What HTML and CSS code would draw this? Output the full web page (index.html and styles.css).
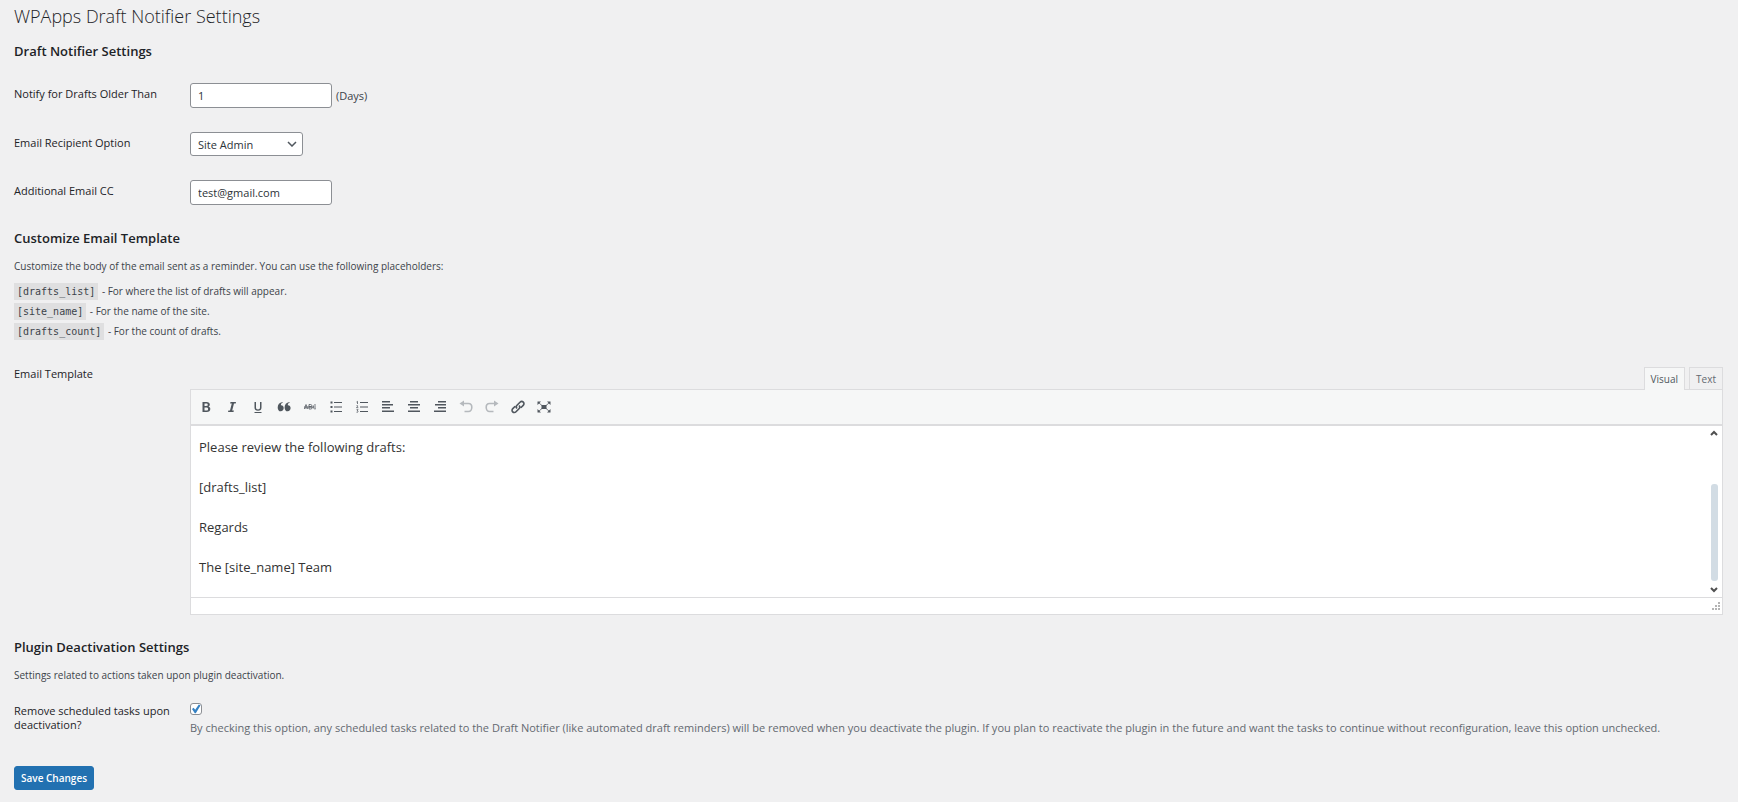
FILE: index.html
```html
<!DOCTYPE html>
<html lang="en">
<head>
<meta charset="utf-8">
<title>WPApps Draft Notifier Settings</title>
<link rel="stylesheet" href="styles.css">
</head>
<body>
<main class="wrap">
  <h1>WPApps Draft Notifier Settings</h1>
  <form>
    <section>
      <h2>Draft Notifier Settings</h2>
      <div class="fields">
        <div class="row">
          <label for="days">Notify for Drafts Older Than</label>
          <div class="field"><input class="control" id="days" type="text" inputmode="numeric" value="1"><span>(Days)</span></div>
        </div>
        <div class="row">
          <label for="recipient">Email Recipient Option</label>
          <div class="field select-box">
            <select class="control" id="recipient"><option>Site Admin</option></select>
            <svg class="chevron" viewBox="0 0 10 6" aria-hidden="true"><path d="M1 1l4 4 4-4"/></svg>
          </div>
        </div>
        <div class="row">
          <label for="cc">Additional Email CC</label>
          <div class="field"><input class="control" id="cc" type="text" value="test@gmail.com"></div>
        </div>
      </div>
    </section>

    <section>
      <h2>Customize Email Template</h2>
      <p class="intro">Customize the body of the email sent as a reminder. You can use the following placeholders:</p>
      <ul class="placeholders">
        <li><code>[drafts_list]</code> - For where the list of drafts will appear.</li>
        <li><code>[site_name]</code> - For the name of the site.</li>
        <li><code>[drafts_count]</code> - For the count of drafts.</li>
      </ul>
      <div class="row editor-row">
        <span class="label" id="template-label">Email Template</span>
        <div class="editor">
          <div class="tabs">
            <button type="button" class="tab active">Visual</button>
            <button type="button" class="tab">Text</button>
          </div>
          <div class="panel">
            <div class="toolbar">
              <button type="button" class="tool" aria-label="Bold"><svg viewBox="0 0 16 16"><path fill-rule="evenodd" d="M4.500 3h4c2.200 0 3.300 1 3.300 2.600 0 1-.5 1.700-1.300 2 1.200.4 1.800 1.200 1.800 2.400C12.300 12 11 13 8.700 13H4.500zM6.500 4.600v2.300h1.700c1 0 1.500-.4 1.500-1.200s-.5-1.100-1.500-1.100zm0 3.800v3h2c1.100 0 1.600-.5 1.600-1.500s-.6-1.500-1.700-1.500z"/></svg></button>
              <button type="button" class="tool" aria-label="Italic"><svg viewBox="0 0 16 16"><path d="M6.500 3H12l-.3 1.500H10L8.200 11.500h1.700L9.500 13H4l.4-1.500H6L7.800 4.500H6.100z"/></svg></button>
              <button type="button" class="tool" aria-label="Underline"><svg viewBox="0 0 16 16"><path d="M4.500 3h1.500v5.500c0 1.300.7 1.900 2 1.900s2-.6 2-1.900V3h1.500v5.600c0 2.100-1.200 3.200-3.500 3.200s-3.500-1.100-3.500-3.200zM4.500 13h7v1h-7z"/></svg></button>
              <button type="button" class="tool" aria-label="Blockquote"><svg viewBox="0 0 16 16"><path d="M7.200 3.300C5.500 4 4.900 5 4.900 6.300c1.700-.1 2.800 1 2.800 2.800 0 1.900-1.200 3.200-2.900 3.200-2 0-3.100-1.500-3.100-3.900C1.700 5.500 3.400 3.500 6.500 3zM14.100 3.300c-1.700.7-2.300 1.700-2.300 3 1.700-.1 2.800 1 2.800 2.800 0 1.900-1.200 3.200-2.900 3.200-2 0-3.100-1.500-3.100-3.900 0-2.900 1.700-4.900 4.800-5.400z"/></svg></button>
              <button type="button" class="tool" aria-label="Strikethrough"><svg class="line" viewBox="0 0 16 16"><path d="M2.300 10L4 5.500l1.800 4.500M3 9h2M7 10V5.500h1.500c1.800 0 1.800 2.200 0 2.200H7.200h1.500c2 0 2 2.300 0 2.300zM14 6.200c-3-2-4.200 5 0 3.400"/><path d="M2 8h12"/></svg></button>
              <button type="button" class="tool" aria-label="Bulleted list"><svg viewBox="0 0 16 16"><path d="M2.500 2.500h2v2h-2zM2.500 7h2v2h-2zM2.500 11.500h2v2h-2zM6 3h8v1H6zM6 7.500h8v1H6zM6 12h8v1H6z"/></svg></button>
              <button type="button" class="tool" aria-label="Numbered list"><svg viewBox="0 0 16 16"><path d="M6 3h8v1H6zM6 7.500h8v1H6zM6 12h8v1H6z"/><path class="thin" d="M2.500 3l1-.6V5M2.500 6.700c1.500-.5 1.700.5 0 2h1.800M2.500 10.700h1.600l-.8 1.100c1.300.2 1 1.900-.8 1.400"/></svg></button>
              <button type="button" class="tool" aria-label="Align left"><svg viewBox="0 0 16 16"><path d="M2 2h8v1.500H2zM2 5h11v1.500H2zM2 8h8v1.500H2zM2 11.500h12V13H2z"/></svg></button>
              <button type="button" class="tool" aria-label="Align center"><svg viewBox="0 0 16 16"><path d="M4 2h8v1.500H4zM2 5h12v1.500H2zM4 8h8v1.500H4zM2 11.500h12V13H2z"/></svg></button>
              <button type="button" class="tool" aria-label="Align right"><svg viewBox="0 0 16 16"><path d="M6 2h8v1.500H6zM3 5h11v1.500H3zM6 8h8v1.500H6zM2 11.500h12V13H2z"/></svg></button>
              <button type="button" class="tool faded" aria-label="Undo"><svg viewBox="0 0 16 16"><path d="M6 1.500v6L1.500 4.500z"/><path class="stroke" d="M5 4.500h5.500c2 0 3.300 1.500 3.300 3.700s-1.300 4.300-3.300 4.300H6.500"/></svg></button>
              <button type="button" class="tool faded" aria-label="Redo"><svg viewBox="0 0 16 16"><path d="M10 1.500v6l4.500-3z"/><path class="stroke" d="M11 4.500H5.500c-2 0-3.300 1.500-3.300 3.700s1.300 4.300 3.300 4.300h4"/></svg></button>
              <button type="button" class="tool" aria-label="Insert link"><svg viewBox="0 0 16 16"><path class="stroke" d="M7 9.500c-1-1-1-2.300 0-3.300l3-3c1-1 2.400-1 3.300-.1s.9 2.300-.1 3.300l-2.400 2.400M9 6.500c1 1 1 2.300 0 3.300l-3 3c-1 1-2.400 1-3.300.1s-.9-2.300.1-3.300l2.400-2.400"/></svg></button>
              <button type="button" class="tool" aria-label="Fullscreen"><svg viewBox="0 0 16 16"><path d="M5.500 6h5v4h-5zM1.500 2.500H5L1.500 6zM14.500 2.500H11L14.500 6zM1.500 13.500H5L1.500 10zM14.500 13.500H11l3.500-3.500z"/><path class="thin" d="M2.500 3.500l4 3.500M13.500 3.500l-4 3.500M2.500 12.500l4-3.500M13.500 12.500l-4-3.500"/></svg></button>
            </div>
            <div class="canvas">
              <div class="content" contenteditable="true" role="textbox" aria-multiline="true" aria-labelledby="template-label">
                <p>Please review the following drafts:</p>
                <p>[drafts_list]</p>
                <p>Regards</p>
                <p>The [site_name] Team</p>
              </div>
              <div class="scrollbar" aria-hidden="true">
                <svg viewBox="0 0 8 6"><path d="M1 5l3-3 3 3"/></svg>
                <div class="thumb"></div>
                <svg viewBox="0 0 8 6"><path d="M1 1l3 3 3-3"/></svg>
              </div>
            </div>
            <div class="status">
              <svg class="grip" viewBox="0 0 8 8" aria-hidden="true"><path d="M6 0h2v2H6zM3 3h2v2H3zM6 3h2v2H6zM0 6h2v2H0zM3 6h2v2H3zM6 6h2v2H6z"/></svg>
            </div>
          </div>
        </div>
      </div>
    </section>

    <section>
      <h2>Plugin Deactivation Settings</h2>
      <p class="intro">Settings related to actions taken upon plugin deactivation.</p>
      <div class="row cleanup-row">
        <label for="cleanup">Remove scheduled tasks upon deactivation?</label>
        <div>
          <input class="check" id="cleanup" type="checkbox" checked>
          <p class="description">By checking this option, any scheduled tasks related to the Draft Notifier (like automated draft reminders) will be removed when you deactivate the plugin. If you plan to reactivate the plugin in the future and want the tasks to continue without reconfiguration, leave this option unchecked.</p>
        </div>
      </div>
    </section>
    <button type="submit" class="save">Save Changes</button>
  </form>
</main>
</body>
</html>
```

FILE: styles.css
```css
* { box-sizing: border-box; }
body {
  margin: 0;
  background: #f0f0f1;
  color: #3c434a;
  font: 10px/16px "Segoe UI", "Open Sans", sans-serif;
}
h1, h2, p, ul { margin: 0; padding: 0; }
button, input, select { font-family: inherit; }
.wrap { padding: 4px 15px 14px 14px; }
h1 { color: #1d2327; font-size: 18px; line-height: 24px; font-weight: 300; }
h2 { color: #1d2327; font-size: 13px; line-height: 20px; font-weight: 600; }
section { padding-top: 13px; }

.fields { display: grid; gap: 24px; padding: 22px 0 10px; }
.row { display: grid; grid-template-columns: 160px minmax(0, 1fr); column-gap: 16px; align-items: start; }
.row > label, .label { color: #1d2327; font-size: 11px; line-height: 14px; font-weight: 500; }
.fields .row > label { padding-top: 4px; }
.field { display: flex; align-items: center; gap: 4px; font-size: 11px; }
.control {
  width: 142px;
  height: 25px;
  padding: 0 7px;
  border: 1px solid #8c8f94;
  border-radius: 3px;
  background: #fff;
  color: #2c3338;
  font-size: 11px;
}
.select-box { position: relative; width: 113px; }
.select-box .control { width: 100%; height: 24px; appearance: none; }
.chevron { position: absolute; right: 6px; width: 10px; height: 6px; pointer-events: none; }
.chevron path { fill: none; stroke: #50575e; stroke-width: 1.5; }

.intro { padding-top: 10px; }
.placeholders { list-style: none; padding-top: 7px; line-height: 20px; }
code {
  display: inline-block;
  margin-right: 1px;
  padding: 0 3px;
  background: #dfdfe0;
  font: 10px/17px "DejaVu Sans Mono", monospace;
}

.editor-row { padding: 26px 0 9px; }
.tabs { display: flex; justify-content: flex-end; gap: 4px; }
.tab {
  height: 22px;
  padding: 0 6px;
  border: 1px solid #dcdcde;
  border-bottom: 0;
  background: #f0f0f1;
  color: #646970;
  font-size: 10px;
}
.tab.active { position: relative; height: 23px; margin-bottom: -1px; background: #f6f7f7; color: #50575e; }
.panel { border: 1px solid #dcdcde; background: #fff; }
.toolbar { display: flex; gap: 10px; height: 36px; align-items: center; padding-left: 7px; border-bottom: 2px solid #dcdcde; background: #f6f7f7; }
.tool { width: 16px; height: 16px; padding: 0; border: 0; background: none; color: #50575e; }
.tool svg { display: block; width: 16px; height: 16px; fill: currentColor; }
.tool .line, .tool .stroke, .tool .thin { fill: none; stroke: currentColor; }
.tool .line, .tool .thin { stroke-width: 0.8; }
.tool .stroke { stroke-width: 1.6; }
.faded { color: #b5b9bd; }
.canvas { display: flex; height: 171px; }
.content { flex: 1; padding: 11px 8px 0; color: #333; font-size: 13px; line-height: 20px; outline: 0; }
.content p + p { margin-top: 20px; }
.scrollbar { display: flex; flex-direction: column; align-items: center; width: 8px; margin-right: 4px; padding: 4px 0; }
.scrollbar svg { width: 8px; height: 6px; fill: none; stroke: #505050; stroke-width: 2; }
.thumb { width: 7px; height: 97px; margin: auto 0 6px; border-radius: 3px; background: #d2dce4; }
.status { display: flex; justify-content: flex-end; align-items: flex-end; height: 17px; padding: 4px 2px; border-top: 1px solid #dcdcde; }
.grip { width: 8px; height: 8px; fill: #b4b4b4; }

.cleanup-row { padding-top: 20px; }
.cleanup-row > label { padding-top: 1px; }
.check {
  display: block;
  appearance: none;
  width: 12px;
  height: 12px;
  margin: 0;
  border: 1px solid #8c8f94;
  border-radius: 3px;
  background: #fff;
}
.check:checked::before {
  content: "";
  display: block;
  width: 10px;
  height: 10px;
  background: #3582c4;
  clip-path: polygon(10% 50%, 26% 38%, 42% 58%, 78% 5%, 95% 15%, 48% 92%, 38% 92%);
}
.description { padding-top: 5px; color: #646970; font-size: 11px; line-height: 16px; }
.save {
  display: block;
  height: 24px;
  margin-top: 30px;
  padding: 0 6px;
  border: 1px solid #2271b1;
  border-radius: 3px;
  background: #2271b1;
  color: #fff;
  font-size: 10px;
  font-weight: 600;
}
```
